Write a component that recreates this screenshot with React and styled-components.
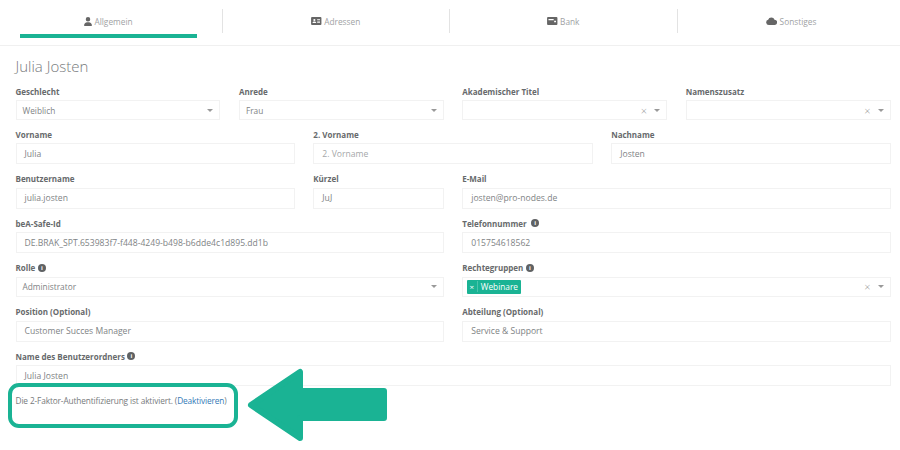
import styled, { createGlobalStyle } from "styled-components";

const GlobalStyle = createGlobalStyle`
  html, body {
    margin: 0;
    background: #fff;
  }
  * {
    box-sizing: border-box;
  }
`;

const Page = styled.div`
  position: relative;
  width: 900px;
  height: 450px;
  overflow: hidden;
  font-family: "Open Sans", "Liberation Sans", sans-serif;
  color: #676a6c;
`;

const TabBar = styled.nav`
  display: grid;
  grid-template-columns: repeat(4, 227.5px);
  height: 46px;
  margin-left: -5px;
  padding-top: 9px;
  border-bottom: 1px solid #f0f0f0;
`;

const Tab = styled.div`
  position: relative;
  height: 24px;
  display: flex;
  align-items: center;
  justify-content: center;
  gap: 2.5px;
  font-size: 8.3px;
  color: #a0a2a4;
  border-right: ${(props) => (props.$last ? "none" : "1px solid #e3e3e3")};

  svg {
    fill: #666;
  }

  &::after {
    content: "";
    display: ${(props) => (props.$active ? "block" : "none")};
    position: absolute;
    left: 25px;
    top: 25px;
    width: 177px;
    height: 4px;
    background: #1ab394;
  }
`;

const Content = styled.main`
  padding: 0 9.5px 0 15.5px;
`;

const Title = styled.h1`
  margin: 10px 0 8px;
  font-size: 15px;
  line-height: 20px;
  font-weight: 300;
  color: #777a7c;
`;

const Row = styled.div`
  display: grid;
  grid-template-columns: ${(props) => props.$cols};
  column-gap: 18.5px;
  margin-bottom: ${(props) => props.$gap || 7.5}px;
`;

const Field = styled.div`
  min-width: 0;
`;

const Label = styled.label`
  display: flex;
  align-items: center;
  gap: 2.5px;
  height: 14px;
  margin-bottom: 2px;
  font-size: 8px;
  font-weight: 700;
  color: #676a6c;
`;

const Info = styled.span`
  display: inline-flex;
  align-items: center;
  justify-content: center;
  width: 8px;
  height: 8px;
  margin-left: ${(props) => (props.$wide ? 2 : 0)}px;
  border-radius: 50%;
  background: #5f6264;
  color: #fff;
  font-size: 6px;
  font-weight: 700;
  line-height: 1;
`;

const Input = styled.div`
  height: 21px;
  display: flex;
  align-items: center;
  padding: 0 8px;
  border: 1px solid #f2f2f2;
  font-size: 8.6px;
  color: ${(props) => (props.$placeholder ? "#a5a7a9" : "#808385")};
  white-space: nowrap;
`;

const SelectBox = styled.div`
  height: 20px;
  display: flex;
  align-items: center;
  padding: 0 6px 0 6px;
  border: 1px solid #f2f2f2;
  font-size: 8.3px;
  color: #808385;
  white-space: nowrap;
`;

const Value = styled.span`
  flex: 1;
  display: flex;
`;

const Clear = styled.span`
  font-size: 11px;
  font-weight: 300;
  color: #999;
  margin-right: 7px;
  line-height: 1;
`;

const Caret = styled.span`
  width: 0;
  height: 0;
  border-left: 3px solid transparent;
  border-right: 3px solid transparent;
  border-top: 3px solid #999;
`;

const Chip = styled.span`
  display: inline-flex;
  align-items: center;
  height: 14px;
  margin-left: -2.5px;
  background: #1ab394;
  color: #fff;
  font-size: 8.3px;
  border-radius: 1px;

  b {
    width: 11px;
    text-align: center;
    font-weight: 400;
    font-size: 8px;
    border-right: 1px solid #4cc4ac;
  }
  span {
    padding: 0 3px;
  }
`;

const Note = styled.p`
  margin: 8.5px 0 0;
  font-size: 8.3px;
  letter-spacing: -0.13px;
  line-height: 12px;
  color: #777a7c;

  a {
    color: #337ab7;
    text-decoration: none;
  }
`;

const Highlight = styled.div`
  position: absolute;
  left: 8px;
  top: 383px;
  width: 230px;
  height: 45px;
  border: 4px solid #1ab394;
  border-radius: 11px;
`;

const Arrow = styled.svg`
  position: absolute;
  left: 240px;
  top: 360px;
`;

function Select({ value, clearable, children }) {
  return (
    <SelectBox>
      <Value>{children || value}</Value>
      {clearable && <Clear>×</Clear>}
      <Caret />
    </SelectBox>
  );
}

const UserIcon = () => (
  <svg width="8" height="9" viewBox="0 0 448 512">
    <path d="M224 256a128 128 0 1 0 0-256 128 128 0 0 0 0 256zm-45 48C80 304 0 384 0 483c0 16 13 29 29 29h390c16 0 29-13 29-29 0-99-80-179-179-179h-90z" />
  </svg>
);

const CardIcon = () => (
  <svg width="10.500" height="8" viewBox="0 0 22 17">
    <path fillRule="evenodd" d="M2 0h18a2 2 0 0 1 2 2v13a2 2 0 0 1-2 2H2a2 2 0 0 1-2-2V2a2 2 0 0 1 2-2zm5 4a2.300 2.300 0 1 0 0 4.600A2.300 2.300 0 0 0 7 4zM3 13h8c0-2-1.500-3.300-4-3.300S3 11 3 13zM13 5v1.500h6V5h-6zm0 3v1.500h6V8h-6zm0 3v1.500h6V11h-6z" />
  </svg>
);

const BankIcon = () => (
  <svg width="10.500" height="8" viewBox="0 0 22 17">
    <path fillRule="evenodd" d="M2 0h18a2 2 0 0 1 2 2v13a2 2 0 0 1-2 2H2a2 2 0 0 1-2-2V2a2 2 0 0 1 2-2zm1 4v3h11V4H3zm12 4v3h4V8h-4z" />
  </svg>
);

const CloudIcon = () => (
  <svg width="11" height="8" viewBox="0 0 24 18">
    <path d="M6 18a6 6 0 0 1-1.500-11.800A7.500 7.500 0 0 1 18.800 6 6 6 0 0 1 18.500 18H6z" />
  </svg>
);

export default function App() {
  return (
    <Page>
      <GlobalStyle />
      <TabBar>
        <Tab $active>
          <UserIcon /> Allgemein
        </Tab>
        <Tab>
          <CardIcon /> Adressen
        </Tab>
        <Tab>
          <BankIcon /> Bank
        </Tab>
        <Tab $last>
          <CloudIcon /> Sonstiges
        </Tab>
      </TabBar>
      <Content>
        <Title>Julia Josten</Title>
        <Row $cols="repeat(4, 1fr)" $gap={7}>
          <Field>
            <Label>Geschlecht</Label>
            <Select value="Weiblich" />
          </Field>
          <Field>
            <Label>Anrede</Label>
            <Select value="Frau" />
          </Field>
          <Field>
            <Label>Akademischer Titel</Label>
            <Select clearable />
          </Field>
          <Field>
            <Label>Namenszusatz</Label>
            <Select clearable />
          </Field>
        </Row>
        <Row $cols="repeat(3, 1fr)">
          <Field>
            <Label>Vorname</Label>
            <Input>Julia</Input>
          </Field>
          <Field>
            <Label>2. Vorname</Label>
            <Input $placeholder>2. Vorname</Input>
          </Field>
          <Field>
            <Label>Nachname</Label>
            <Input>Josten</Input>
          </Field>
        </Row>
        <Row $cols="279.3px 1fr 428.250px">
          <Field>
            <Label>Benutzername</Label>
            <Input>julia.josten</Input>
          </Field>
          <Field>
            <Label>Kürzel</Label>
            <Input>JuJ</Input>
          </Field>
          <Field>
            <Label>E-Mail</Label>
            <Input>josten@pro-nodes.de</Input>
          </Field>
        </Row>
        <Row $cols="1fr 1fr">
          <Field>
            <Label>beA-Safe-Id</Label>
            <Input>DE.BRAK_SPT.653983f7-f448-4249-b498-b6dde4c1d895.dd1b</Input>
          </Field>
          <Field>
            <Label>
              Telefonnummer <Info $wide>i</Info>
            </Label>
            <Input>015754618562</Input>
          </Field>
        </Row>
        <Row $cols="1fr 1fr" $gap={8}>
          <Field>
            <Label>
              Rolle <Info>i</Info>
            </Label>
            <Select value="Administrator" />
          </Field>
          <Field>
            <Label>
              Rechtegruppen <Info>i</Info>
            </Label>
            <Select clearable>
              <Chip>
                <b>×</b>
                <span>Webinare</span>
              </Chip>
            </Select>
          </Field>
        </Row>
        <Row $cols="1fr 1fr">
          <Field>
            <Label>Position (Optional)</Label>
            <Input>Customer Succes Manager</Input>
          </Field>
          <Field>
            <Label>Abteilung (Optional)</Label>
            <Input>Service &amp; Support</Input>
          </Field>
        </Row>
        <Row $cols="1fr">
          <Field>
            <Label>
              Name des Benutzerordners <Info>i</Info>
            </Label>
            <Input>Julia Josten</Input>
          </Field>
        </Row>
        <Note>
          Die 2-Faktor-Authentifizierung ist aktiviert. (<a href="#off">Deaktivieren</a>)
        </Note>
      </Content>
      <Highlight />
      <Arrow width="150" height="85" viewBox="0 0 150 85">
        <path
          d="M11 45 L60 12 L60 31 L144 31 L144 58 L60 58 L60 78 Z"
          fill="#1ab394"
          stroke="#1ab394"
          strokeWidth="6"
          strokeLinejoin="round"
        />
      </Arrow>
    </Page>
  );
}
